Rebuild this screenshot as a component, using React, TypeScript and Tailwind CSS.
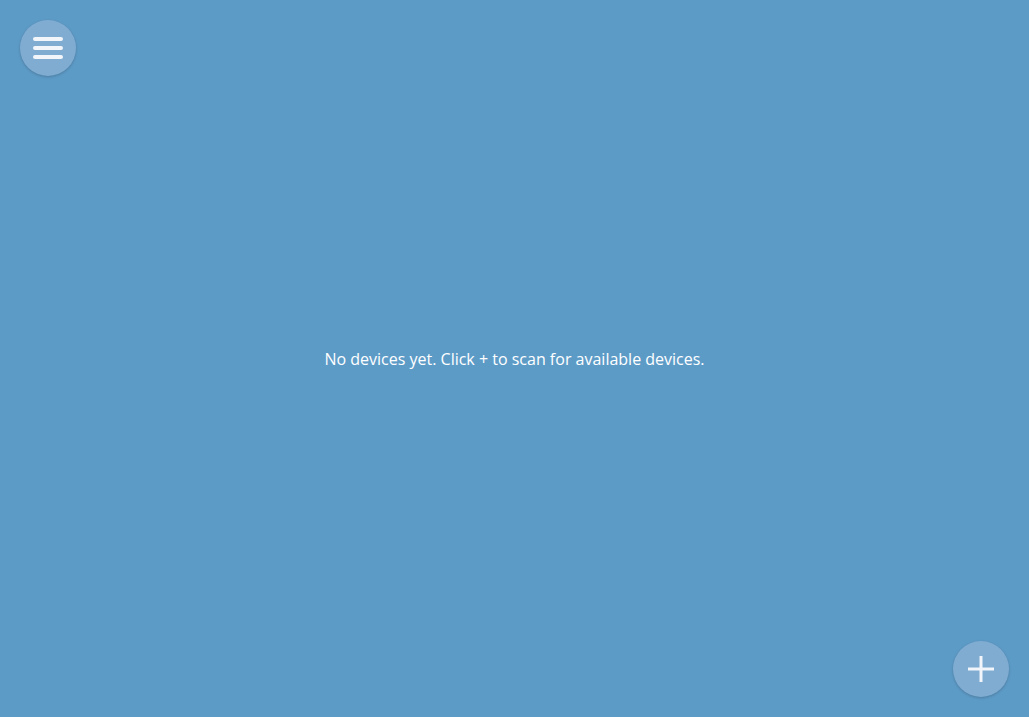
const App = () => {
  return (
    <div className="relative w-full h-screen bg-[#5d9bc7] flex items-center justify-center font-['Open_Sans',sans-serif] overflow-hidden">
      <button className="absolute left-5 top-5 w-14 h-14 rounded-full bg-[#80acd2] shadow-[0_1px_3px_rgba(0,0,0,0.2)] flex items-center justify-center">
        <svg width="30" height="24" viewBox="0 0 30 24">
          <rect x="0" y="1" width="30" height="4" rx="2" fill="#f2f6fa" />
          <rect x="0" y="10" width="30" height="4" rx="2" fill="#f2f6fa" />
          <rect x="0" y="19" width="30" height="4" rx="2" fill="#f2f6fa" />
        </svg>
      </button>
      <p className="text-white text-base">No devices yet. Click + to scan for available devices.</p>
      <button className="absolute right-5 bottom-5 w-14 h-14 rounded-full bg-[#80acd2] shadow-[0_1px_3px_rgba(0,0,0,0.2)] flex items-center justify-center">
        <svg width="26" height="26" viewBox="0 0 26 26">
          <rect x="0" y="11.5" width="26" height="3" fill="#f2f6fa" />
          <rect x="11.5" y="0" width="3" height="26" fill="#f2f6fa" />
        </svg>
      </button>
    </div>
  );
};

export default App;
